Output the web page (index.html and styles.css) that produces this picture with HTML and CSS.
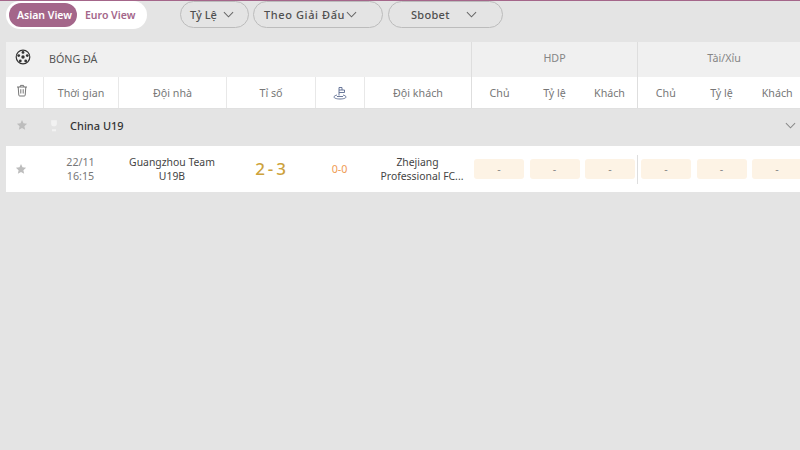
FILE: index.html
```html
<!DOCTYPE html>
<html lang="vi">
<head>
<meta charset="utf-8">
<title>Bóng đá</title>
<link rel="stylesheet" href="styles.css">
</head>
<body>
<div class="page">
  <div class="toolbar">
    <div class="views">
      <span class="view active">Asian View</span>
      <span class="view">Euro View</span>
    </div>
    <div class="drop d1"><span>Tỷ Lệ</span><svg class="chev" viewBox="0 0 12 7"><path d="M1 1l5 5 5-5"/></svg></div>
    <div class="drop d2"><span>Theo Giải Đấu</span><svg class="chev" viewBox="0 0 12 7"><path d="M1 1l5 5 5-5"/></svg></div>
    <div class="drop d3"><span>Sbobet</span><svg class="chev" viewBox="0 0 12 7"><path d="M1 1l5 5 5-5"/></svg></div>
  </div>

  <div class="board">
    <div class="row head">
      <div class="c-sport">
        <svg class="ball" viewBox="0 0 16 16"><circle cx="8" cy="8" r="6.8"/><circle class="fill" cx="8" cy="8" r="1.700"/><circle class="fill" cx="8" cy="3.400" r="1.400"/><circle class="fill" cx="3.700" cy="6.600" r="1.400"/><circle class="fill" cx="12.300" cy="6.600" r="1.400"/><circle class="fill" cx="5.300" cy="11.900" r="1.400"/><circle class="fill" cx="10.700" cy="11.900" r="1.400"/></svg>
      </div>
      <div class="c-title">BÓNG ĐÁ</div>
      <div class="c-group sep">HDP</div>
      <div class="c-group c-group-last">Tài/Xỉu</div>
    </div>

    <div class="row sub">
      <div class="cell c1"><svg class="trash" viewBox="0 0 12 13"><path d="M1 3h10M4 3l.5-1.600h3L8 3M2.200 3l.6 8.200c0 .5.4.8.9.8h4.600c.5 0 .9-.3.9-.8L9.800 3M4.800 5.200v4.300M7.200 5.200v4.300"/></svg></div>
      <div class="cell c2 line">Thời gian</div>
      <div class="cell c3 line">Đội nhà</div>
      <div class="cell c4 line">Tỉ số</div>
      <div class="cell c5 line"><svg class="pin" viewBox="0 0 14 14"><path d="M6 9.500V1.500h3v2.500M6 4h5.500v2.500H6M4 9c-1.700.4-3 1.100-3 2 0 1.200 2.700 2 6 2s6-.8 6-2c0-.9-1.300-1.600-3-2M4 10.500h6"/></svg></div>
      <div class="cell c6 line">Đội khách</div>
      <div class="odds sep">
        <span>Chủ</span><span>Tỷ lệ</span><span>Khách</span>
      </div>
      <div class="odds">
        <span>Chủ</span><span>Tỷ lệ</span><span>Khách</span>
      </div>
    </div>

    <div class="league">
      <svg class="star" viewBox="0 0 24 24"><path d="M12 2l3 6.700 7.200.8-5.400 4.800 1.500 7.100L12 17.800l-6.300 3.600 1.500-7.100L1.800 9.500 9 8.700z"/></svg>
      <svg class="cup" viewBox="0 0 12 16"><path d="M2.500 1.500h7v4.500c0 1.800-1.500 3-3.500 3s-3.500-1.200-3.500-3zM3.500 12.500h5v2.500h-5z"/></svg>
      <span class="league-name">China U19</span>
      <svg class="chev league-chev" viewBox="0 0 12 7"><path d="M1 1l5 5 5-5"/></svg>
    </div>

    <div class="row match">
      <div class="cell c1"><svg class="star" viewBox="0 0 24 24"><path d="M12 2l3 6.700 7.200.8-5.400 4.800 1.500 7.100L12 17.800l-6.300 3.600 1.500-7.100L1.800 9.500 9 8.700z"/></svg></div>
      <div class="cell c2 when">22/11<br>16:15</div>
      <div class="cell c3 team">Guangzhou Team<br>U19B</div>
      <div class="cell c4 score">2 - 3</div>
      <div class="cell c5 half">0-0</div>
      <div class="cell c6 team"><div>Zhejiang<br><span class="tail">Professional FC...</span></div></div>
      <div class="quotes sep">
        <span class="quote">-</span><span class="quote">-</span><span class="quote">-</span>
      </div>
      <div class="quotes">
        <span class="quote">-</span><span class="quote">-</span><span class="quote">-</span>
      </div>
    </div>
  </div>
</div>
</body>
</html>
```

FILE: styles.css
```css
* { box-sizing: border-box; }
html, body { margin: 0; padding: 0; }
body {
  width: 800px;
  height: 450px;
  overflow: hidden;
  background: #e4e4e4;
  font-family: "Noto Sans", "Open Sans", sans-serif;
  font-size: 10.700px;
  color: #6f6f6f;
}
.page {
  border-top: 1px solid #a4668a;
  height: 450px;
  overflow: hidden;
}
.toolbar {
  display: flex;
  align-items: flex-start;
  height: 41px;
  padding-left: 6px;
}
.views {
  display: flex;
  align-items: center;
  flex: none;
  width: 141px;
  height: 28px;
  padding-left: 3px;
  background: #fff;
  border-radius: 14px;
  margin-right: 33px;
}
.view {
  font-weight: 600;
  font-size: 10.500px;
  color: #a4668a;
  height: 24px;
  line-height: 24px;
  padding: 0 8px;
  border-radius: 12px;
  white-space: nowrap;
}
.view.active {
  width: 68px;
  flex: none;
  background: #a4668a;
  color: #fff;
}
.drop {
  display: flex;
  align-items: center;
  flex: none;
  height: 27px;
  border: 1px solid #bcbcbc;
  border-radius: 14px;
  font-weight: 500;
  font-size: 11px;
  letter-spacing: .3px;
  color: #505050;
}
.d1 { width: 69px; gap: 6px; margin-right: 4px; padding-left: 9px; letter-spacing: 0; }
.d2 { width: 130px; gap: 1px; margin-right: 5px; padding-left: 10px; letter-spacing: .6px; }
.d3 { width: 115px; gap: 16px; padding-left: 22px; }
.chev {
  width: 11px;
  height: 7px;
  flex: none;
  fill: none;
  stroke: #666;
  stroke-width: 1.100;
}
.board { margin-left: 6px; width: 800px; }
.row { display: flex; }
.head {
  height: 35px;
  background: #f0f0f0;
}
.c-sport {
  width: 37px;
  flex: none;
  display: flex;
  justify-content: center;
  padding: 7px 3px 0 0;
}
.ball { width: 16px; height: 16px; fill: none; stroke: #333; stroke-width: 1.200; }
.ball .fill { fill: #333; stroke: none; }
.c-title {
  width: 428px;
  flex: none;
  padding-left: 6px;
  line-height: 34px;
  color: #555;
}
.c-group {
  width: 167px;
  flex: none;
  text-align: center;
  line-height: 32px;
  color: #858585;
}
.c-group-last { padding-left: 5px; }
.sep { border-right: 1px solid #dedede; border-left: 1px solid #dedede; }
.sub {
  height: 32px;
  background: #fff;
  border-bottom: 1px solid #e0e0e0;
  color: #777;
}
.cell {
  display: flex;
  align-items: center;
  justify-content: center;
  text-align: center;
  flex: none;
}
.line { border-left: 1px solid #e8e8e8; }
.c1 { width: 37px; }
.c2 { width: 75px; }
.c3 { width: 108px; }
.c4 { width: 89px; }
.c5 { width: 49px; }
.c6 { width: 107px; }
.trash { width: 12px; height: 13px; margin: 0 6px 4px 0; fill: none; stroke: #666; stroke-width: .9; }
.pin { width: 14px; height: 14px; fill: none; stroke: #5a6a90; stroke-width: .9; }
.odds, .quotes {
  display: flex;
  flex: none;
  width: 167px;
  align-items: center;
}
.odds span { flex: 1; text-align: center; }
.league {
  display: flex;
  align-items: center;
  height: 37px;
  padding-bottom: 5px;
}
.star { width: 12px; height: 12px; fill: #bdbdbd; }
.league > .star { margin-left: 10px; }
.cup { width: 10px; height: 13px; margin-left: 21px; fill: #f2f2f2; }
.league-name {
  margin-left: 11px;
  font-weight: 500;
  font-size: 11px;
  color: #333;
}
.league-chev { margin-left: auto; margin-right: 10px; stroke: #888; }
.match {
  height: 46px;
  background: #fff;
  line-height: 14.500px;
  color: #444;
  align-items: center;
}
.match .c1 .star { margin-right: 7px; }
.when { color: #777; }
.team { font-size: 10.400px; color: #444; }
.tail { padding-left: 9px; }
.score { font-size: 17px; font-weight: 500; color: #cda23c; word-spacing: -1.500px; }
.half { color: #ef9a52; }
.quotes {
  gap: 5.500px;
  padding: 0 3px;
  height: 29px;
}
.quotes.sep { border-left: none; }
.quotes .quote {
  width: 50px;
  height: 20px;
  flex: none;
  background: #fdf3e5;
  border-radius: 3px;
  text-align: center;
  line-height: 20px;
  color: #888;
}
```
